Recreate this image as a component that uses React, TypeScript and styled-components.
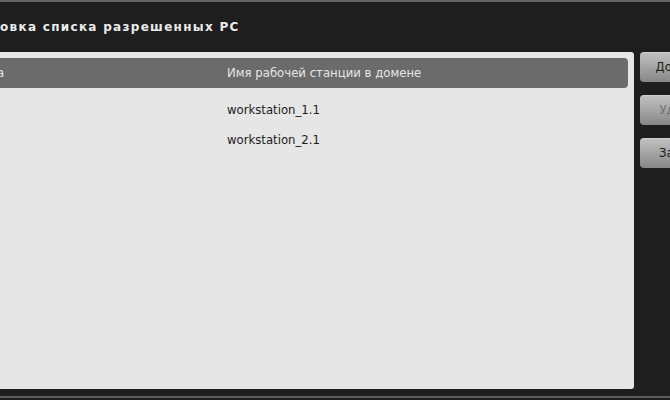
import React from "react";
import styled, { createGlobalStyle } from "styled-components";

const Global = createGlobalStyle`
  html, body { margin: 0; padding: 0; background: #1e1e1e; }
  body { width: 670px; height: 400px; overflow: hidden; }
`;

const Window = styled.div`
  width: 670px;
  height: 400px;
  box-sizing: border-box;
  background: #1e1e1e;
  border-top: 2px solid #646464;
  display: flex;
  flex-direction: column;
  overflow: hidden;
  font-family: "DejaVu Sans", Verdana, sans-serif;
`;

const TitleBar = styled.div`
  height: 50px;
  flex: none;
  display: flex;
  align-items: center;
  padding-bottom: 1px;
  box-sizing: border-box;
`;

const Title = styled.h1`
  margin: 0;
  font-size: 12px;
  font-weight: bold;
  letter-spacing: 1.3px;
  color: #ececec;
  white-space: nowrap;
`;

const Body = styled.div`
  flex: none;
  height: 337px;
  display: flex;
  gap: 6px;
`;

const Panel = styled.div`
  width: 634px;
  flex: none;
  background: #e6e6e6;
  border-radius: 0 3px 3px 0;
  padding: 6px 6px 0 0;
  box-sizing: border-box;
  overflow: hidden;
`;

const Grid = styled.div`
  display: grid;
  grid-template-columns: 220px 1fr;
`;

const HeaderRow = styled(Grid)`
  height: 30px;
  background: #6b6b6b;
  border-radius: 0 4px 4px 0;
  color: #e6e6e6;
  margin-bottom: 7px;
`;

const DataRow = styled(Grid)`
  height: 30px;
  color: #1c1c1c;
`;

const Cell = styled.div<{ $cut?: boolean }>`
  display: flex;
  align-items: center;
  font-size: 11.7px;
  padding-left: ${(p) => (p.$cut ? "0" : "7px")};
  margin-left: ${(p) => (p.$cut ? "-3px" : "0")};
  white-space: nowrap;
  overflow: hidden;
`;

const ButtonColumn = styled.div`
  display: flex;
  flex-direction: column;
  gap: 13px;
`;

const Button = styled.button<{ $disabled?: boolean }>`
  width: 90px;
  height: 30px;
  flex: none;
  border: none;
  border-radius: 4px;
  background: linear-gradient(#c2c2c2, #878787);
  box-shadow: inset 0 1px 0 rgba(255, 255, 255, 0.2);
  color: ${(p) => (p.$disabled ? "#727272" : "#1a1a1a")};
  font-family: "DejaVu Sans", Verdana, sans-serif;
  font-size: 11.7px;
  padding: 0;
  text-align: center;
  cursor: default;
`;

const Gap = styled.div`
  height: 7px;
  flex: none;
`;

const BottomEdge = styled.div`
  height: 2px;
  flex: none;
  background: #5a5a5a;
`;

const rows = ["workstation_1.1", "workstation_2.1"];

export default function App() {
  return (
    <>
      <Global />
      <Window>
        <TitleBar>
          <Title>овка списка разрешенных PC</Title>
        </TitleBar>
        <Body>
          <Panel>
            <HeaderRow>
              <Cell $cut>а</Cell>
              <Cell>Имя рабочей станции в домене</Cell>
            </HeaderRow>
            {rows.map((r) => (
              <DataRow key={r}>
                <Cell />
                <Cell>{r}</Cell>
              </DataRow>
            ))}
          </Panel>
          <ButtonColumn>
            <Button>Добавить</Button>
            <Button $disabled>Удалить</Button>
            <Button>Закрыть</Button>
          </ButtonColumn>
        </Body>
        <Gap />
        <BottomEdge />
      </Window>
    </>
  );
}
